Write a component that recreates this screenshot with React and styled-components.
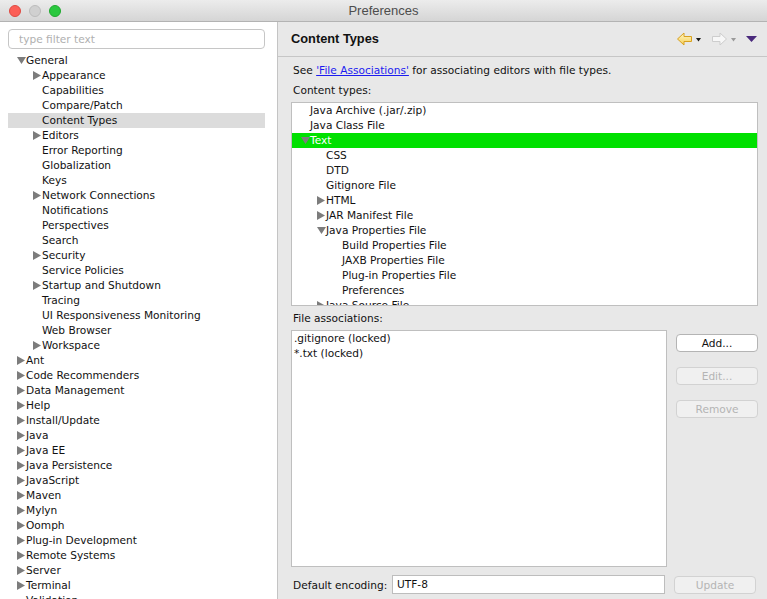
import React from 'react'
import styled, { createGlobalStyle } from 'styled-components'

const GlobalStyle = createGlobalStyle`
  html, body {
    margin: 0;
    padding: 0;
    background: #fff;
  }
  body {
    font-family: "DejaVu Sans", "Liberation Sans", sans-serif;
    font-size: 10.6px;
    color: #111;
  }
`

// left tree: [label, level, twisty, selected] twisty: 'open' | 'closed' | undefined
const prefTree = [
  ['General', 0, 'open'],
  ['Appearance', 1, 'closed'],
  ['Capabilities', 1],
  ['Compare/Patch', 1],
  ['Content Types', 1, null, true],
  ['Editors', 1, 'closed'],
  ['Error Reporting', 1],
  ['Globalization', 1],
  ['Keys', 1],
  ['Network Connections', 1, 'closed'],
  ['Notifications', 1],
  ['Perspectives', 1],
  ['Search', 1],
  ['Security', 1, 'closed'],
  ['Service Policies', 1],
  ['Startup and Shutdown', 1, 'closed'],
  ['Tracing', 1],
  ['UI Responsiveness Monitoring', 1],
  ['Web Browser', 1],
  ['Workspace', 1, 'closed'],
  ['Ant', 0, 'closed'],
  ['Code Recommenders', 0, 'closed'],
  ['Data Management', 0, 'closed'],
  ['Help', 0, 'closed'],
  ['Install/Update', 0, 'closed'],
  ['Java', 0, 'closed'],
  ['Java EE', 0, 'closed'],
  ['Java Persistence', 0, 'closed'],
  ['JavaScript', 0, 'closed'],
  ['Maven', 0, 'closed'],
  ['Mylyn', 0, 'closed'],
  ['Oomph', 0, 'closed'],
  ['Plug-in Development', 0, 'closed'],
  ['Remote Systems', 0, 'closed'],
  ['Server', 0, 'closed'],
  ['Terminal', 0, 'closed'],
  ['Validation', 0],
]

const contentTypes = [
  ['Java Archive (.jar/.zip)', 0],
  ['Java Class File', 0],
  ['Text', 0, 'open', true],
  ['CSS', 1],
  ['DTD', 1],
  ['Gitignore File', 1],
  ['HTML', 1, 'closed'],
  ['JAR Manifest File', 1, 'closed'],
  ['Java Properties File', 1, 'open'],
  ['Build Properties File', 2],
  ['JAXB Properties File', 2],
  ['Plug-in Properties File', 2],
  ['Preferences', 2],
  ['Java Source File', 1, 'closed'],
]

const Window = styled.div`
  width: 767px;
  height: 599px;
  display: flex;
  flex-direction: column;
  overflow: hidden;
`

const TitleBar = styled.div`
  height: 22px;
  box-sizing: border-box;
  border-bottom: 1px solid #b3b3b3;
  background: linear-gradient(#ececec, #d5d5d5);
  display: grid;
  grid-template-columns: 1fr auto 1fr;
  align-items: center;
`

const Lights = styled.div`
  display: flex;
  gap: 8px;
  padding-left: 9px;
  padding-top: 1px;
`

const Light = styled.span`
  width: 12px;
  height: 12px;
  border-radius: 50%;
  box-sizing: border-box;
  background: ${p => p.$color};
  border: 0.5px solid ${p => p.$edge};
`

const Title = styled.div`
  font-family: "Liberation Sans", sans-serif;
  font-size: 13px;
  color: #4d4d4d;
`

const Body = styled.div`
  flex: 1;
  display: flex;
  min-height: 0;
`

const Sidebar = styled.div`
  width: 278px;
  flex: none;
  box-sizing: border-box;
  background: #fff;
  border-right: 1px solid #c4c4c4;
  padding: 7px 12px 0 8px;
  overflow: hidden;
`

const FilterInput = styled.input`
  display: block;
  width: 100%;
  height: 20px;
  box-sizing: border-box;
  border: 1px solid #c6c6c6;
  border-radius: 4px;
  padding: 0 10px;
  margin: 0;
  font: inherit;
  outline: none;
  &::placeholder {
    color: #b0b0b0;
  }
`

const Tree = styled.div`
  margin-top: 4px;
`

const Row = styled.div`
  height: 15px;
  line-height: 15px;
  display: flex;
  align-items: center;
  white-space: nowrap;
  padding-left: ${p => 8 + p.$level * 16}px;
  background: ${p => p.$bg || 'transparent'};
  color: ${p => p.$fg || '#111'};
`

const Twisty = styled.span`
  width: 10px;
  height: 15px;
  flex: none;
  display: flex;
  align-items: center;
  padding-left: 1px;
  box-sizing: border-box;
`

const TwistyIcon = ({ state }) => {
  if (state === 'open')
    return (
      <svg width="9" height="7" viewBox="0 0 9 7">
        <path d="M0 0 L9 0 L4.5 7 Z" fill="#7c7c7c" />
      </svg>
    )
  if (state === 'closed')
    return (
      <svg width="8" height="9" viewBox="0 0 8 9">
        <path d="M0 0 L8 4.5 L0 9 Z" fill="#7c7c7c" />
      </svg>
    )
  return null
}

const RightPanel = styled.div`
  flex: 1;
  background: #e8e8e8;
  display: flex;
  flex-direction: column;
  min-width: 0;
`

const Header = styled.div`
  height: 35px;
  box-sizing: border-box;
  border-bottom: 1px solid #c6c6c6;
  display: flex;
  align-items: center;
  justify-content: space-between;
  padding: 0 10px 1px 13px;
`

const HeaderTitle = styled.div`
  font-family: "Liberation Sans", sans-serif;
  font-weight: bold;
  font-size: 12.8px;
  color: #111;
`

const NavIcons = styled.div`
  display: flex;
  align-items: center;
  gap: 3px;
`

const NavGap = styled.span`
  width: ${p => p.$w}px;
`

const Content = styled.div`
  flex: 1;
  display: flex;
  flex-direction: column;
  padding: 6px 9px 0 13px;
`

const Text = styled.div`
  height: 14px;
  line-height: 14px;
  padding-left: 2px;
  margin-top: ${p => p.$mt || 0}px;
  white-space: nowrap;
`

const Link = styled.a`
  color: #1c1cf0;
  text-decoration: underline;
`

const ListBox = styled.div`
  box-sizing: border-box;
  background: #fff;
  border: 1px solid #bfbfbf;
  overflow: hidden;
  height: ${p => p.$h}px;
  width: ${p => (p.$w ? `${p.$w}px` : 'auto')};
  margin-top: ${p => p.$mt || 0}px;
`

const PlainItem = styled.div`
  height: 15px;
  line-height: 15px;
  padding-left: 2px;
`

const AssocArea = styled.div`
  display: flex;
  margin-top: 5px;
`

const ButtonColumn = styled.div`
  display: flex;
  flex-direction: column;
  gap: 15px;
  margin-left: 9px;
  padding-top: 4px;
`

const Button = styled.button`
  width: 82px;
  height: 18px;
  box-sizing: border-box;
  border-radius: 4px;
  border: 1px solid ${p => (p.disabled ? '#d2d2d2' : '#b4b4b4')};
  background: ${p => (p.disabled ? '#f0f0f0' : '#fff')};
  color: ${p => (p.disabled ? '#b4b4b4' : '#111')};
  font: inherit;
  padding: 0;
  margin: 0;
  margin-left: ${p => p.$ml || 0}px;
`

const EncodingRow = styled.div`
  display: flex;
  align-items: center;
  margin-top: 8px;
`

const EncodingLabel = styled.div`
  width: 101px;
  padding-left: 2px;
  box-sizing: border-box;
  white-space: nowrap;
`

const EncodingInput = styled.div`
  width: 273px;
  height: 19px;
  box-sizing: border-box;
  border: 1px solid #bdbdbd;
  background: #fff;
  padding-left: 4px;
  line-height: 17px;
`

const BackIcon = () => (
  <svg width="17" height="14" viewBox="0 0 17 14">
    <defs>
      <linearGradient id="bk" x1="0" y1="0" x2="0" y2="1">
        <stop offset="0" stopColor="#fff6c4" />
        <stop offset="1" stopColor="#f6cf55" />
      </linearGradient>
    </defs>
    <path d="M1.5 7 L8 1 L8 4.5 L15.5 4.5 L15.5 9.5 L8 9.5 L8 13 Z" fill="url(#bk)" stroke="#d7a020" strokeWidth="1" strokeLinejoin="round" />
  </svg>
)

const ForwardIcon = () => (
  <svg width="17" height="14" viewBox="0 0 17 14">
    <path d="M15.5 7 L9 1 L9 4.5 L1.5 4.5 L1.5 9.5 L9 9.5 L9 13 Z" fill="#f7f7f7" stroke="#cdcdcd" strokeWidth="1" strokeLinejoin="round" />
  </svg>
)

const DropIcon = ({ color }) => (
  <svg width="5" height="4" viewBox="0 0 5 4" style={{ marginTop: 3 }}>
    <path d="M0 0 L5 0 L2.5 3.5 Z" fill={color} />
  </svg>
)

const MenuIcon = () => (
  <svg width="11" height="6" viewBox="0 0 11 6">
    <path d="M0 0 L11 0 L5.5 6 Z" fill="#4a2a7c" />
  </svg>
)

const App = () => {
  return (
    <>
      <GlobalStyle />
      <Window>
        <TitleBar>
          <Lights>
            <Light $color="#fc5f57" $edge="#de4a42" />
            <Light $color="#d0d0d0" $edge="#bcbcbc" />
            <Light $color="#2ac83f" $edge="#1fa92f" />
          </Lights>
          <Title>Preferences</Title>
          <div />
        </TitleBar>
        <Body>
          <Sidebar>
            <FilterInput placeholder="type filter text" />
            <Tree>
              {prefTree.map(([label, level, twisty, selected]) => (
                <Row key={label} $level={level} $bg={selected ? '#dcdcdc' : null}>
                  <Twisty>
                    <TwistyIcon state={twisty} />
                  </Twisty>
                  {label}
                </Row>
              ))}
            </Tree>
          </Sidebar>
          <RightPanel>
            <Header>
              <HeaderTitle>Content Types</HeaderTitle>
              <NavIcons>
                <BackIcon />
                <DropIcon color="#1a1a1a" />
                <NavGap $w={4} />
                <ForwardIcon />
                <DropIcon color="#9a9a9a" />
                <NavGap $w={4} />
                <MenuIcon />
              </NavIcons>
            </Header>
            <Content>
              <Text>
                See <Link>'File Associations'</Link> for associating editors with file types.
              </Text>
              <Text $mt={6}>Content types:</Text>
              <ListBox $h={204} $mt={5}>
                {contentTypes.map(([label, level, twisty, hl]) => (
                  <Row
                    key={label}
                    $level={level}
                    $bg={hl ? '#00e000' : null}
                    $fg={hl ? '#fff' : null}
                  >
                    <Twisty>
                      <TwistyIcon state={twisty} />
                    </Twisty>
                    {label}
                  </Row>
                ))}
              </ListBox>
              <Text $mt={5}>File associations:</Text>
              <AssocArea>
                <ListBox $h={237} $w={376}>
                  <PlainItem>.gitignore (locked)</PlainItem>
                  <PlainItem>*.txt (locked)</PlainItem>
                </ListBox>
                <ButtonColumn>
                  <Button>Add...</Button>
                  <Button disabled>Edit...</Button>
                  <Button disabled>Remove</Button>
                </ButtonColumn>
              </AssocArea>
              <EncodingRow>
                <EncodingLabel>Default encoding:</EncodingLabel>
                <EncodingInput>UTF-8</EncodingInput>
                <Button disabled $ml={9}>Update</Button>
              </EncodingRow>
            </Content>
          </RightPanel>
        </Body>
      </Window>
    </>
  )
}

export default App
